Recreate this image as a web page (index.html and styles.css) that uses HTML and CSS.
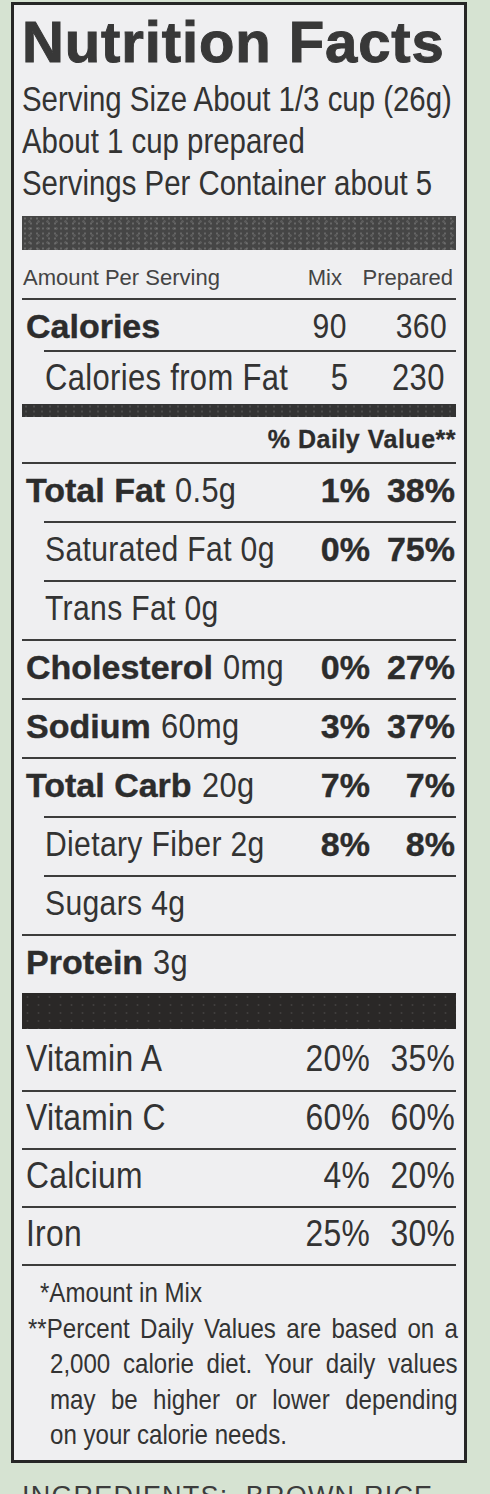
FILE: index.html
```html
<!DOCTYPE html>
<html lang="en">
<head>
<meta charset="utf-8">
<title>Nutrition Facts</title>
<link rel="stylesheet" href="styles.css">
</head>
<body>
<div class="label">
  <h1 class="title">Nutrition Facts</h1>
  <div class="serving">
    <div class="cond">Serving Size About 1/3 cup (26g)</div>
    <div class="cond">About 1 cup prepared</div>
    <div class="cond">Servings Per Container about 5</div>
  </div>
  <div class="bar bar-top"></div>

  <div class="row row-head">
    <span class="lbl">Amount Per Serving</span>
    <span class="c1">Mix</span>
    <span class="c2">Prepared</span>
  </div>
  <div class="row row-cal">
    <span class="lbl"><b>Calories</b></span>
    <span class="c1 cond-r">90</span>
    <span class="c2 cond-r">360</span>
  </div>
  <div class="row row-cff sub">
    <span class="lbl cond">Calories from Fat</span>
    <span class="c1 cond-r">5</span>
    <span class="c2 cond-r">230</span>
  </div>
  <div class="bar bar-mid"></div>
  <div class="dv">% Daily Value**</div>

  <div class="row nut">
    <span class="lbl"><b>Total Fat</b> <span class="amt">0.5g</span></span>
    <b class="c1">1%</b><b class="c2">38%</b>
  </div>
  <div class="row nut sub">
    <span class="lbl cond">Saturated Fat 0g</span>
    <b class="c1">0%</b><b class="c2">75%</b>
  </div>
  <div class="row nut sub">
    <span class="lbl cond">Trans Fat 0g</span>
  </div>
  <div class="row nut">
    <span class="lbl"><b>Cholesterol</b> <span class="amt">0mg</span></span>
    <b class="c1">0%</b><b class="c2">27%</b>
  </div>
  <div class="row nut">
    <span class="lbl"><b>Sodium</b> <span class="amt">60mg</span></span>
    <b class="c1">3%</b><b class="c2">37%</b>
  </div>
  <div class="row nut">
    <span class="lbl"><b>Total Carb</b> <span class="amt">20g</span></span>
    <b class="c1">7%</b><b class="c2">7%</b>
  </div>
  <div class="row nut sub">
    <span class="lbl cond">Dietary Fiber 2g</span>
    <b class="c1">8%</b><b class="c2">8%</b>
  </div>
  <div class="row nut sub">
    <span class="lbl cond">Sugars 4g</span>
  </div>
  <div class="row nut">
    <span class="lbl"><b>Protein</b> <span class="amt">3g</span></span>
  </div>
  <div class="bar bar-bottom"></div>

  <div class="row vit first">
    <span class="lbl cond">Vitamin A</span>
    <span class="c1 cond-r">20%</span><span class="c2 cond-r">35%</span>
  </div>
  <div class="row vit">
    <span class="lbl cond">Vitamin C</span>
    <span class="c1 cond-r">60%</span><span class="c2 cond-r">60%</span>
  </div>
  <div class="row vit">
    <span class="lbl cond">Calcium</span>
    <span class="c1 cond-r">4%</span><span class="c2 cond-r">20%</span>
  </div>
  <div class="row vit">
    <span class="lbl cond">Iron</span>
    <span class="c1 cond-r">25%</span><span class="c2 cond-r">30%</span>
  </div>

  <div class="notes">
    <div class="note-1 cond">*Amount in Mix</div>
    <div class="jl jl-first cond">**Percent Daily Values are based on a</div>
    <div class="jl cond">2,000 calorie diet. Your daily values</div>
    <div class="jl cond">may be higher or lower depending</div>
    <div class="last cond">on your calorie needs.</div>
  </div>
</div>
<div class="ingredients">INGREDIENTS:&nbsp; BROWN RICE</div>
</body>
</html>
```

FILE: styles.css
```css
html, body {
  margin: 0;
  padding: 0;
  overflow: hidden;
  height: 1494px;
}

body {
  background: #d6e3d2;
  color: #333333;
  font-family: "Liberation Sans", Arial, sans-serif;
}

.label {
  box-sizing: border-box;
  width: 456px;
  margin: 2px 0 0 11px;
  padding: 0 8px;
  border: 3px solid #262626;
  background: #efeff1;
}

/* condensed text: Helvetica Condensed look */
.cond {
  transform: scaleX(0.86);
  transform-origin: left center;
  white-space: nowrap;
}

.cond-r {
  transform: scaleX(0.86);
  transform-origin: right center;
}

.amt {
  display: inline-block;
  transform: scaleX(0.88);
  transform-origin: left center;
}

.title {
  margin: 8px 0 0;
  font-weight: bold;
  font-size: 58px;
  line-height: 58px;
  letter-spacing: 0.9px;
  color: #383838;
  -webkit-text-stroke: 1px #383838;
  white-space: nowrap;
}

.serving {
  margin-top: 7px;
  font-size: 35px;
  line-height: 42px;
}

.serving .cond {
  transform: scaleX(0.84);
}

.bar-top {
  margin-top: 12px;
  height: 34px;
  background:
    radial-gradient(circle, rgba(255,255,255,0.18) 0.8px, transparent 1.4px) 0 0 / 6px 5px,
    radial-gradient(circle, rgba(255,255,255,0.12) 1px, transparent 1.6px) 3px 2px / 9px 7px,
    #454545;
}

.bar-mid {
  height: 13px;
  background:
    radial-gradient(circle, rgba(255,255,255,0.12) 0.8px, transparent 1.4px) 0 0 / 8px 5px,
    #333333;
}

.bar-bottom {
  height: 36px;
  background:
    radial-gradient(circle, rgba(255,255,255,0.1) 0.7px, transparent 1.3px) 0 0 / 11px 8px,
    #2a2827;
}

.row {
  display: flex;
  align-items: baseline;
  border-top: 2px solid #3c3c3c;
  padding-left: 4px;
  white-space: nowrap;
  font-size: 35px;
  line-height: 51px;
  letter-spacing: 0.4px;
}

.row b {
  font-weight: bold;
  font-size: 34px;
  letter-spacing: 0;
  color: #2c2c2c;
  -webkit-text-stroke: 0.4px #2c2c2c;
}

.row.sub {
  margin-left: 22px;
  padding-left: 1px;
}

.lbl {
  flex: 1;
}

.c1, .c2 {
  text-align: right;
}

.c2 {
  width: 85px;
  margin-right: 1px;
}

.row-head {
  border-top: 0;
  height: 40px;
  padding-top: 8px;
  padding-left: 1px;
  font-size: 22px;
  line-height: 40px;
  letter-spacing: 0;
  color: #444444;
}

.row-head .c2 {
  width: 111px;
  margin-right: 3px;
}

.row-cal {
  height: 49px;
  padding-top: 1px;
  line-height: 50px;
}

.row-cal .c2 {
  width: 100px;
  margin-right: 9px;
}

.row-cff {
  height: 51px;
  padding-top: 1px;
  line-height: 50px;
  font-size: 36px;
}

.row-cff .c2 {
  width: 103px;
  margin-right: 11px;
}

.dv {
  height: 45px;
  font-weight: bold;
  font-size: 25px;
  line-height: 45px;
  letter-spacing: 0.5px;
  text-align: right;
  color: #2c2c2c;
  -webkit-text-stroke: 0.3px #2c2c2c;
}

.nut {
  height: 57px;
}

.vit {
  height: 56px;
  font-size: 37px;
  letter-spacing: 0.3px;
}

.vit.first {
  border-top: 0;
  height: 57px;
  padding-top: 4px;
}

.notes {
  border-top: 2px solid #3c3c3c;
  padding: 9px 0 7px 28px;
  font-size: 28px;
  line-height: 35.5px;
}

.note-1 {
  margin-left: -10px;
}

.jl {
  width: 474px;
  text-align: justify;
  text-align-last: justify;
}

.jl-first {
  width: 500px;
  margin-left: -22px;
}

.ingredients {
  margin: 19px 0 0 22px;
  font-size: 27px;
  line-height: 28px;
  letter-spacing: 1.2px;
  color: #3c3c3c;
  white-space: nowrap;
}
```
